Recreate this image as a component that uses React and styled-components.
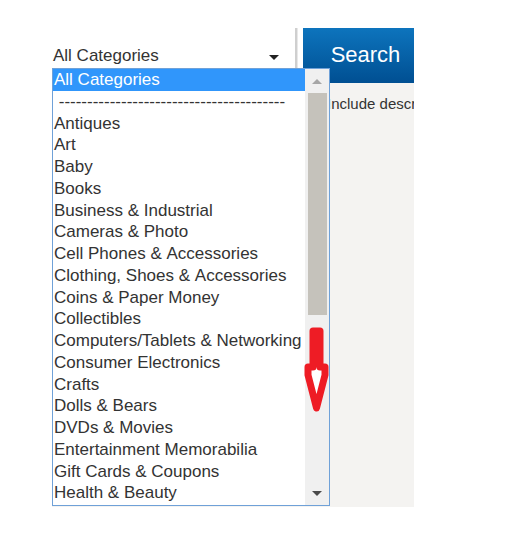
import React from 'react';
import styled, { createGlobalStyle } from 'styled-components';

const GlobalStyle = createGlobalStyle`
  html, body {
    margin: 0;
    padding: 0;
    background: #ffffff;
  }
  body {
    font-family: "Liberation Sans", Arial, sans-serif;
    color: #333333;
  }
`;

const Page = styled.div`
  padding: 28px 0 0 52px;
`;

const Wrapper = styled.div`
  position: relative;
  width: 362px;
`;

const TopBar = styled.div`
  display: flex;
  align-items: stretch;
  height: 55px;
`;

const SelectBox = styled.div`
  display: flex;
  align-items: center;
  justify-content: space-between;
  width: 243px;
  padding: 0 16px 0 1px;
  box-sizing: border-box;
  font-size: 17px;
  color: #333;
`;

const Caret = styled.span`
  width: 0;
  height: 0;
  border-left: 5px solid transparent;
  border-right: 5px solid transparent;
  border-top: 5px solid #222;
  margin-top: 3px;
`;

const Divider = styled.div`
  width: 2px;
  background: #cfcfcf;
  border-right: 1px solid #e8e8e8;
  margin-right: 5px;
`;

const SearchButton = styled.button`
  flex: 1;
  border: none;
  background: linear-gradient(#0d74bd, #004f92);
  color: #ffffff;
  font-family: "Liberation Sans", Arial, sans-serif;
  font-size: 22px;
  padding: 0 0 2px 14px;
  cursor: pointer;
`;

const Panel = styled.div`
  height: 424px;
  background: #f4f3f1;
  padding: 12px 0 0 275px;
  box-sizing: border-box;
  font-size: 15px;
  white-space: nowrap;
  overflow: hidden;
  color: #333;
`;

const Dropdown = styled.div`
  position: absolute;
  left: 0;
  top: 40px;
  width: 278px;
  height: 438px;
  border: 1px solid #6fa1d8;
  box-sizing: border-box;
  background: #ffffff;
  display: flex;
`;

const OptionList = styled.ul`
  list-style: none;
  margin: 0;
  padding: 0;
  flex: 1;
  overflow: hidden;
`;

const Option = styled.li`
  height: 21.75px;
  line-height: 21.75px;
  padding-left: 1px;
  font-size: 17px;
  white-space: nowrap;
  color: ${({ $selected }) => ($selected ? '#ffffff' : '#333333')};
  background: ${({ $selected }) => ($selected ? '#3096fb' : 'transparent')};
`;

const ScrollBar = styled.div`
  width: 24px;
  background: #f0f0f0;
  display: flex;
  flex-direction: column;
  align-items: center;
`;

const ArrowButton = styled.div`
  height: 24px;
  width: 100%;
  display: flex;
  align-items: center;
  justify-content: center;
  flex-shrink: 0;
`;

const Triangle = styled.span`
  width: 0;
  height: 0;
  border-left: 5px solid transparent;
  border-right: 5px solid transparent;
  ${({ $up }) =>
    $up
      ? 'border-bottom: 5px solid #a6a6a6;'
      : 'border-top: 5px solid #4a4a4a;'}
`;

const Track = styled.div`
  flex: 1;
  width: 100%;
  padding: 0 2px 0 3px;
  box-sizing: border-box;
`;

const Thumb = styled.div`
  height: 222px;
  background: #c5c2bb;
`;

const Annotation = styled.svg`
  position: absolute;
  left: 252px;
  top: 296px;
`;

const categories = [
  'All Categories',
  ' ----------------------------------------',
  'Antiques',
  'Art',
  'Baby',
  'Books',
  'Business & Industrial',
  'Cameras & Photo',
  'Cell Phones & Accessories',
  'Clothing, Shoes & Accessories',
  'Coins & Paper Money',
  'Collectibles',
  'Computers/Tablets & Networking',
  'Consumer Electronics',
  'Crafts',
  'Dolls & Bears',
  'DVDs & Movies',
  'Entertainment Memorabilia',
  'Gift Cards & Coupons',
  'Health & Beauty',
];

const App = () => {
  return (
    <Page>
      <GlobalStyle />
      <Wrapper>
        <TopBar>
          <SelectBox>
            All Categories
            <Caret />
          </SelectBox>
          <Divider />
          <SearchButton>Search</SearchButton>
        </TopBar>
        <Panel>Include description</Panel>

        <Dropdown>
          <OptionList>
            {categories.map((c, i) => (
              <Option key={i} $selected={i === 0}>
                {c.replace(/ /g, '\u00a0')}
              </Option>
            ))}
          </OptionList>
          <ScrollBar>
            <ArrowButton><Triangle $up /></ArrowButton>
            <Track><Thumb /></Track>
            <ArrowButton><Triangle /></ArrowButton>
          </ScrollBar>
        </Dropdown>

        <Annotation width="26" height="92" viewBox="0 0 26 92">
          <path
            d="M9 7 L16 7 L16 43 L21 43 L21 51 L12.5 84 L4 51 L4 43 L9 43 Z"
            fill="#ffffff"
            stroke="#ee1c25"
            strokeWidth="7"
            strokeLinejoin="round"
          />
        </Annotation>
      </Wrapper>
    </Page>
  );
};

export default App;
